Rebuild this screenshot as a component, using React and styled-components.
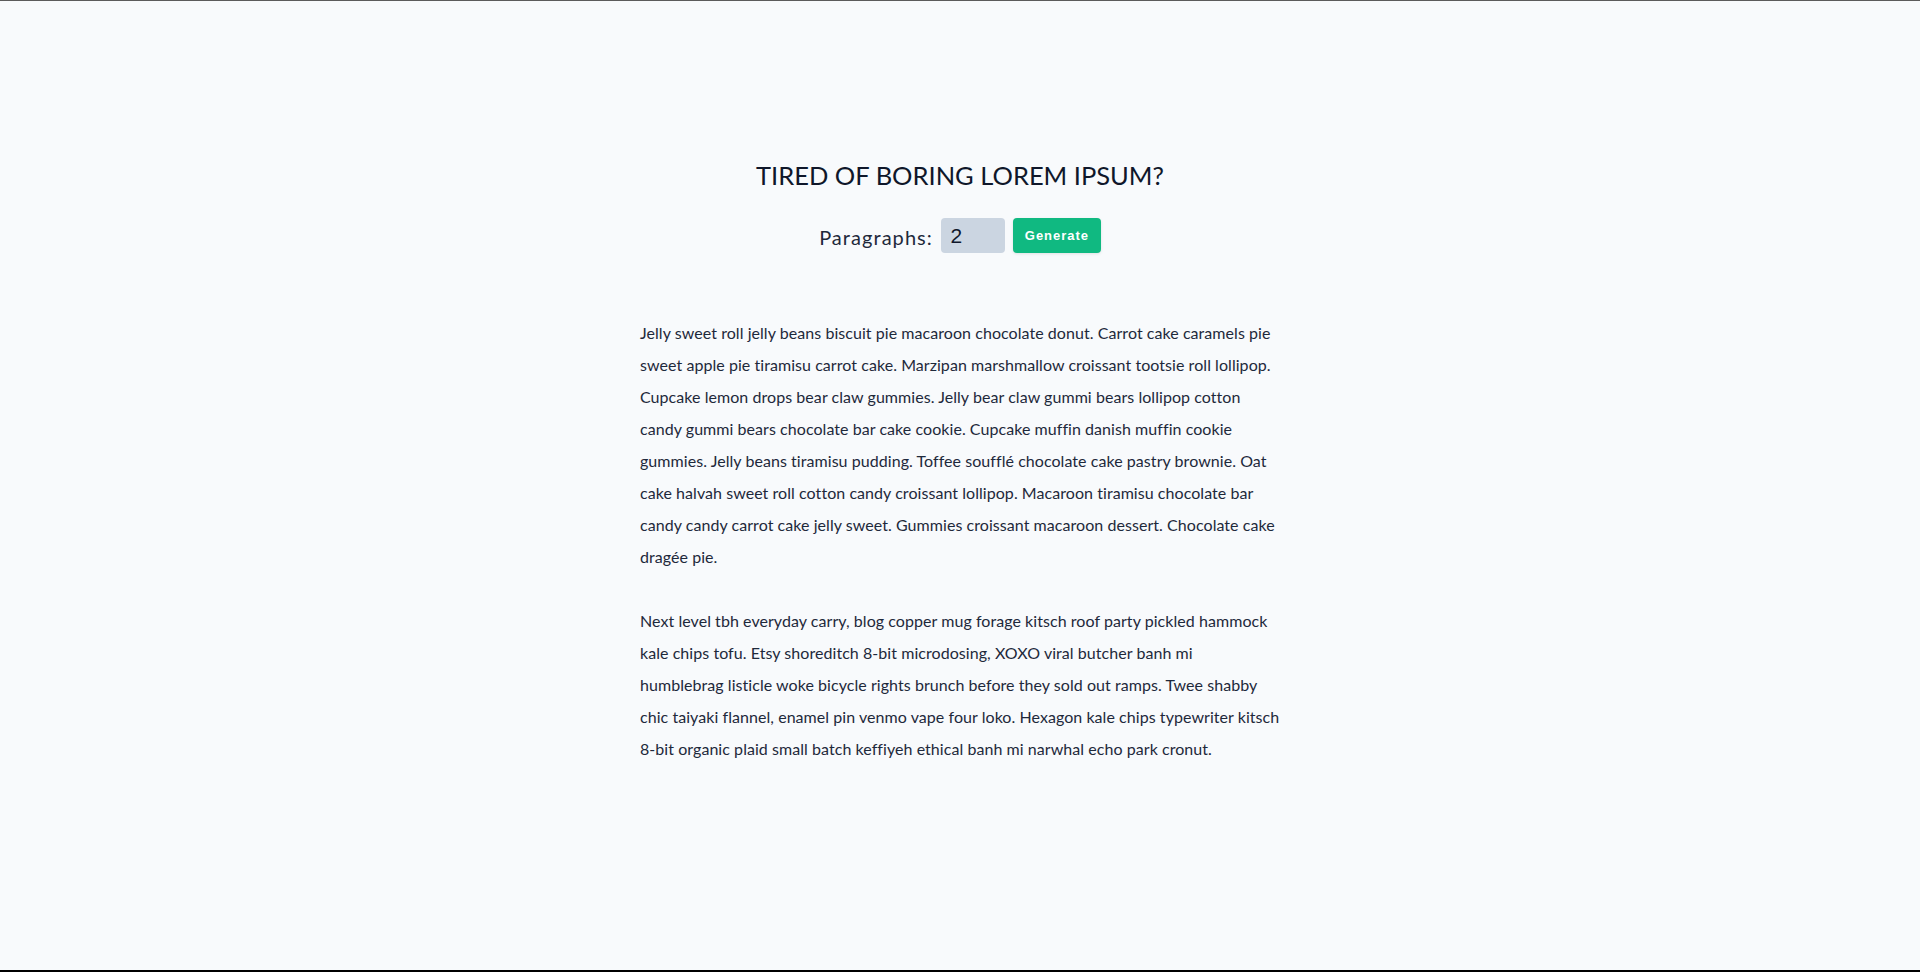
import React, { useState } from 'react';
import styled, { createGlobalStyle } from 'styled-components';

const GlobalStyle = createGlobalStyle`
  *,
  *::before,
  *::after {
    box-sizing: border-box;
  }

  body {
    margin: 0;
    background: #f8fafc;
    font-family: Lato, 'Noto Sans', sans-serif;
    color: #0f172a;
  }
`;

const data = [
  'Jelly sweet roll jelly beans biscuit pie macaroon chocolate donut. Carrot cake caramels pie sweet apple pie tiramisu carrot cake. Marzipan marshmallow croissant tootsie roll lollipop. Cupcake lemon drops bear claw gummies. Jelly bear claw gummi bears lollipop cotton candy gummi bears chocolate bar cake cookie. Cupcake muffin danish muffin cookie gummies. Jelly beans tiramisu pudding. Toffee soufflé chocolate cake pastry brownie. Oat cake halvah sweet roll cotton candy croissant lollipop. Macaroon tiramisu chocolate bar candy candy carrot cake jelly sweet. Gummies croissant macaroon dessert. Chocolate cake dragée pie.',
  'Next level tbh everyday carry, blog copper mug forage kitsch roof party pickled hammock kale chips tofu. Etsy shoreditch 8-bit microdosing, XOXO viral butcher banh mi humblebrag listicle woke bicycle rights brunch before they sold out ramps. Twee shabby chic taiyaki flannel, enamel pin venmo vape four loko. Hexagon kale chips typewriter kitsch 8-bit organic plaid small batch keffiyeh ethical banh mi narwhal echo park cronut.',
  'Pug kinfolk skateboard everyday carry, sriracha vice freegan gochujang. Humblebrag lumbersexual copper mug, bespoke meh pour-over pok pok.',
];

const Page = styled.main`
  min-height: 100vh;
  border-top: 1px solid #5b5b5b;
  border-bottom: 2px solid #000;
  padding-top: 157px;
`;

const Section = styled.section`
  width: 90vw;
  max-width: 40rem;
  margin: 0 auto;
`;

const Title = styled.h3`
  margin: 0;
  text-align: center;
  text-transform: uppercase;
  font-size: 25.5px;
  font-weight: 400;
  line-height: 35px;
  letter-spacing: 0;
  color: #0f172a;
`;

const Form = styled.form`
  display: flex;
  justify-content: center;
  align-items: center;
  margin-top: 25px;
  margin-bottom: 64px;
`;

const Label = styled.label`
  padding-top: 3px;
  font-size: 1.25rem;
  letter-spacing: 1.05px;
  color: #1e293b;
`;

const NumberInput = styled.input`
  width: 4rem;
  height: 35px;
  margin: 0 0.5rem;
  padding: 0.25rem 0.5rem 0.25rem 0.6rem;
  border: none;
  border-radius: 0.25rem;
  background: #cbd5e1;
  font-family: 'Liberation Sans', Arial, sans-serif;
  font-size: 21px;
  color: #0f172a;
  outline: none;
  -moz-appearance: textfield;

  &::-webkit-inner-spin-button,
  &::-webkit-outer-spin-button {
    -webkit-appearance: none;
    margin: 0;
  }
`;

const Button = styled.button`
  height: 35px;
  width: 88px;
  padding: 0;
  border: none;
  border-radius: 0.25rem;
  background: #10b981;
  color: #fff;
  font-family: 'Liberation Sans', Arial, sans-serif;
  font-size: 13px;
  font-weight: 700;
  letter-spacing: 0.06rem;
  cursor: pointer;
  box-shadow: 0 1px 3px rgba(0, 0, 0, 0.1);
`;

const Article = styled.article``;

const Paragraph = styled.p`
  margin: 0 0 32px;
  font-size: 1rem;
  line-height: 2;
  letter-spacing: 0.055px;
  color: #1e293b;
`;

const App = () => {
  const [count, setCount] = useState(2);
  const [text, setText] = useState(data.slice(0, 2));

  const handleSubmit = (e) => {
    e.preventDefault();
    const amount = Math.max(1, Math.min(parseInt(count, 10) || 1, data.length));
    setText(data.slice(0, amount));
  };

  return (
    <>
      <GlobalStyle />
      <Page>
        <Section>
          <Title>tired of boring lorem ipsum?</Title>
          <Form onSubmit={handleSubmit}>
            <Label htmlFor="amount">Paragraphs:</Label>
            <NumberInput
              type="number"
              id="amount"
              name="amount"
              min="1"
              step="1"
              max={data.length}
              value={count}
              onChange={(e) => setCount(e.target.value)}
            />
            <Button type="submit">Generate</Button>
          </Form>
          <Article>
            {text.map((item, index) => (
              <Paragraph key={index}>{item}</Paragraph>
            ))}
          </Article>
        </Section>
      </Page>
    </>
  );
};

export default App;
